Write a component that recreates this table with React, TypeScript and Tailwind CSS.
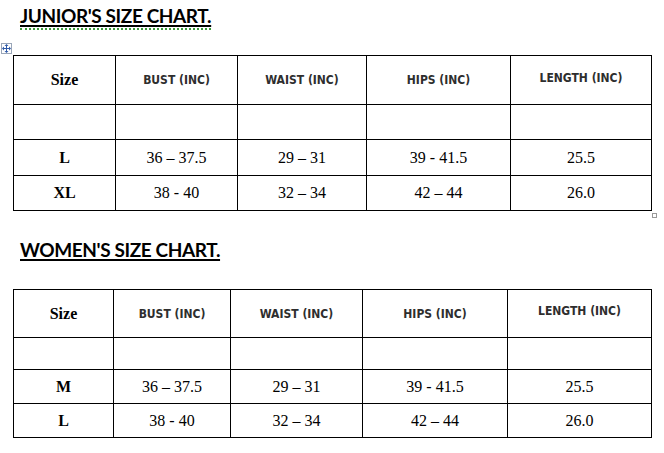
type Row = [string, string, string, string, string];

const HEAD = ['BUST (INC)', 'WAIST (INC)', 'HIPS (INC)', 'LENGTH (INC)'];

const junior: Row[] = [
  ['L', '36 – 37.5', '29 – 31', '39 - 41.5', '25.5'],
  ['XL', '38 - 40', '32 – 34', '42 – 44', '26.0'],
];

const women: Row[] = [
  ['M', '36 – 37.5', '29 – 31', '39 - 41.5', '25.5'],
  ['L', '38 - 40', '32 – 34', '42 – 44', '26.0'],
];

const serif = { fontFamily: "'Liberation Serif', 'Times New Roman', serif" };

function Title({ children, squiggle }: { children: string; squiggle?: boolean }) {
  return (
    <div className="ml-[20px] h-6 leading-6">
      <span
        className="relative inline-block text-[19px] tracking-[-0.4px] font-bold text-black underline decoration-2 underline-offset-[2px]"
        style={{ fontFamily: "Lato, 'Open Sans', sans-serif" }}
      >
        {children}
        {squiggle && (
          <span className="absolute left-0 right-0 top-[24px] h-[2px] border-b-2 border-dotted border-[#3c9a3c]" />
        )}
      </span>
    </div>
  );
}

function SizeTable({
  rows,
  grid,
  heights,
}: {
  rows: Row[];
  grid: string;
  heights: [string, string, string, string];
}) {
  return (
    <div className={`grid gap-px bg-black p-px w-fit ${grid}`}>
      {/* header */}
      <div className={`bg-white flex items-center justify-center text-[16px] font-bold text-black ${heights[0]}`} style={serif}>
        Size
      </div>
      {HEAD.map((h, i) => (
        <div
          key={h}
          className={`bg-white flex items-center justify-center text-[12px] font-bold text-[#2e2e2e] ${heights[0]} ${i === 3 ? 'pb-[5px]' : ''}`}
          style={{ fontFamily: "'DejaVu Sans Condensed', 'DejaVu Sans', Verdana, sans-serif", fontStretch: 'condensed' }}
        >
          {h}
        </div>
      ))}
      {/* empty row */}
      {[0, 1, 2, 3, 4].map((i) => (
        <div key={i} className={`bg-white ${heights[1]}`} />
      ))}
      {rows.map((r, ri) =>
        r.map((c, ci) => (
          <div
            key={`${ri}-${ci}`}
            className={`bg-white flex items-center justify-center text-[16px] text-black ${ci === 0 ? 'font-bold' : ''} ${heights[ri + 2]}`}
            style={serif}
          >
            {c}
          </div>
        )),
      )}
    </div>
  );
}

function MoveHandle() {
  return (
    <div className="absolute left-[-12px] top-[-12px] w-[11px] h-[11px] border border-[#9aa6b8] bg-white flex items-center justify-center">
      <svg width="9" height="9" viewBox="0 0 9 9" fill="#2f5aa8">
        <rect x="4" y="1" width="1" height="7" />
        <rect x="1" y="4" width="7" height="1" />
        <path d="M4.5 0 L6.5 2 L2.5 2 Z" />
        <path d="M4.5 9 L6.5 7 L2.5 7 Z" />
        <path d="M0 4.5 L2 2.5 L2 6.5 Z" />
        <path d="M9 4.5 L7 2.5 L7 6.5 Z" />
      </svg>
    </div>
  );
}

export default function App() {
  return (
    <div className="w-[664px] h-[453px] bg-white overflow-hidden pt-[4px]">
      <Title squiggle>JUNIOR'S SIZE CHART.</Title>

      <div className="relative ml-[13px] mt-[27px] w-fit">
        <MoveHandle />
        <SizeTable
          rows={junior}
          grid="grid-cols-[101px_121px_128px_143px_140px]"
          heights={['h-[48px]', 'h-[34px]', 'h-[35px]', 'h-[34px]']}
        />
        <div className="absolute right-[-5px] bottom-[-7px] w-[5px] h-[5px] border border-[#9a9a9a] bg-white" />
      </div>

      <div className="mt-[27px]">
        <Title>WOMEN'S SIZE CHART.</Title>
      </div>

      <div className="ml-[13px] mt-[27px] w-fit">
        <SizeTable
          rows={women}
          grid="grid-cols-[99px_116px_131px_144px_143px]"
          heights={['h-[47px]', 'h-[31px]', 'h-[33px]', 'h-[33px]']}
        />
      </div>
    </div>
  );
}
